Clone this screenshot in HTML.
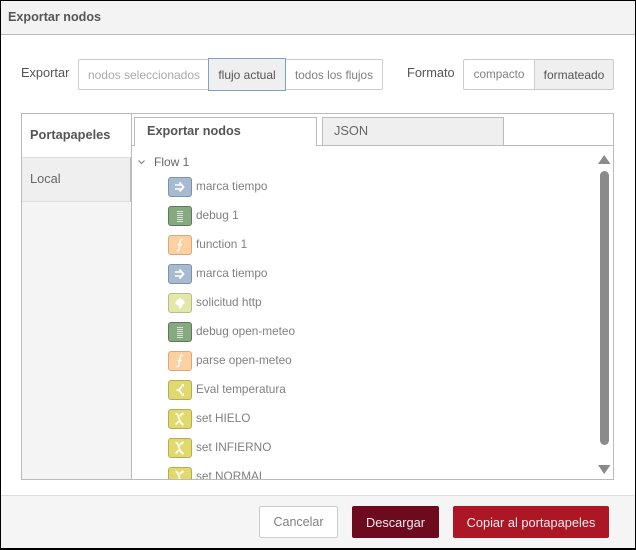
<!DOCTYPE html>
<html><head><meta charset="utf-8">
<style>
*{box-sizing:border-box}
html,body{margin:0;padding:0;width:636px;height:550px;overflow:hidden;background:#fff;font-family:"Liberation Sans",sans-serif;font-size:12px;color:#555}
.a{position:absolute}
.t{position:absolute;white-space:nowrap;line-height:16px}
.b{position:absolute;border:1px solid #ccc;display:flex;align-items:center;justify-content:center;white-space:nowrap;font-size:12px;background:#fff}
.ic{position:absolute;left:168px;width:24px;height:20px;border-radius:3px;border:1px solid;overflow:hidden}
.ic svg{position:absolute;left:0;top:0}
.n{position:absolute;white-space:nowrap;color:#808080;font-size:11.8px;line-height:16px}
</style></head><body>
<div class="a" style="left:0;top:0;width:636px;height:550px;border:1px solid #000;border-width:1px 1px 2px 1px"></div>
<div class="a" style="left:1px;top:1px;width:634px;height:34px;background:#f3f3f3;border-bottom:1px solid #bbb"></div>
<div class="t" style="left:8px;top:9px;font-size:12.6px;font-weight:bold;color:#555">Exportar nodos</div>

<div class="t" style="left:21px;top:65px;font-size:12.8px">Exportar</div>
<div class="b" style="left:78px;top:59px;width:131px;height:31px;color:#aaa;border-radius:2px 0 0 2px;padding-left:1px">nodos seleccionados</div>
<div class="b" style="left:285px;top:59px;width:98px;height:31px;color:#808080;border-radius:0 2px 2px 0;font-size:11.8px">todos los flujos</div>
<div class="b" style="left:208px;top:58px;width:78px;height:33px;background:#efefef;border-color:#7d9fcb;color:#555">flujo actual</div>
<div class="t" style="left:407px;top:65px;font-size:12.8px">Formato</div>
<div class="b" style="left:463px;top:59px;width:72px;height:31px;color:#808080;border-radius:2px 0 0 2px;font-size:11.7px">compacto</div>
<div class="b" style="left:534px;top:59px;width:80px;height:31px;background:#efefef;color:#555;border-radius:0 2px 2px 0">formateado</div>

<div class="a" style="left:21px;top:113px;width:593px;height:367px;border:1px solid #bbb;background:#fff"></div>
<div class="a" style="left:22px;top:114px;width:110px;height:365px;background:#f4f4f4;border-right:1px solid #bbb"></div>
<div class="a" style="left:22px;top:114px;width:109px;height:43px;background:#fff"></div>
<div class="t" style="left:30px;top:127px;font-weight:bold;font-size:12.8px;color:#555">Portapapeles</div>
<div class="a" style="left:22px;top:157px;width:109px;height:45px;background:#efefef;border-top:1px solid #ddd;border-bottom:1px solid #ddd;border-right:1px solid #bbb"></div>
<div class="t" style="left:30px;top:171px;font-size:12.8px;color:#666">Local</div>

<div class="a" style="left:132px;top:145px;width:481px;height:1px;background:#bbb"></div>
<div class="a" style="left:134px;top:117px;width:183px;height:29px;background:#fff;border:1px solid #bbb;border-bottom:0"></div>
<div class="t" style="left:147px;top:123px;font-weight:bold;font-size:12.7px;color:#555">Exportar nodos</div>
<div class="a" style="left:322px;top:117px;width:182px;height:29px;background:#efefef;border:1px solid #bbb"></div>
<div class="t" style="left:334px;top:123px;font-size:12.8px;color:#666">JSON</div>

<svg class="a" style="left:137px;top:158px" width="10" height="8"><path d="M1.500 2.500L4.500 5.500L7.500 2.500" fill="none" stroke="#777" stroke-width="1"/></svg>
<div class="t" style="left:154px;top:154px;color:#666">Flow 1</div>

<div class="a" style="left:132px;top:146px;width:481px;height:333px;overflow:hidden">
<div class="n" style="left:64px;top:32px">marca tiempo</div>
<div class="n" style="left:64px;top:61px">debug 1</div>
<div class="n" style="left:64px;top:90px">function 1</div>
<div class="n" style="left:64px;top:119px">marca tiempo</div>
<div class="n" style="left:64px;top:148px">solicitud http</div>
<div class="n" style="left:64px;top:177px">debug open-meteo</div>
<div class="n" style="left:64px;top:206px">parse open-meteo</div>
<div class="n" style="left:64px;top:235px">Eval temperatura</div>
<div class="n" style="left:64px;top:264px">set HIELO</div>
<div class="n" style="left:64px;top:293px">set INFIERNO</div>
<div class="n" style="left:64px;top:322px">set NORMAL</div>

<div class="ic" style="left:36px;top:31px;background:#a6bbcf;border-color:#7f91a5"><svg width="22" height="18"><path d="M6 7h6M6 11h6" stroke="#fff" stroke-width="1.600" fill="none"/><path d="M10.500 4.500L14.500 9L10.500 13.500" stroke="#fff" stroke-width="1.800" fill="none"/></svg></div>
<div class="ic" style="left:36px;top:60px;background:#87a980;border-color:#5f7a59"><svg width="22" height="18"><path d="M8 4.500h6M8 6.500h6M8 8.500h6M8 10.500h6M8 12.500h6M8 14.500h6" stroke="#d8e4d5" stroke-width="1"/></svg></div>
<div class="ic" style="left:36px;top:89px;background:#fdd0a2;border-color:#d7a980"><svg width="22" height="18"><path d="M14 3.500c-2-.5-2.800.5-3 2.500l-1 7c-.2 1.500-1 2-2.500 1.500M8.500 8.500h4.500" fill="none" stroke="#fff" stroke-width="1.400"/></svg></div>
<div class="ic" style="left:36px;top:118px;background:#a6bbcf;border-color:#7f91a5"><svg width="22" height="18"><path d="M6 7h6M6 11h6" stroke="#fff" stroke-width="1.600" fill="none"/><path d="M10.500 4.500L14.500 9L10.500 13.500" stroke="#fff" stroke-width="1.800" fill="none"/></svg></div>
<div class="ic" style="left:36px;top:147px;background:#e3e8a8;border-color:#b9bd8a"><svg width="22" height="18"><path d="M11 4l4 2.500 1 2.500-2 1.500-1.500 3-2 1-1-3-3-1.500 0-2.500z" fill="#fff"/></svg></div>
<div class="ic" style="left:36px;top:176px;background:#87a980;border-color:#5f7a59"><svg width="22" height="18"><path d="M8 4.500h6M8 6.500h6M8 8.500h6M8 10.500h6M8 12.500h6M8 14.500h6" stroke="#d8e4d5" stroke-width="1"/></svg></div>
<div class="ic" style="left:36px;top:205px;background:#fdd0a2;border-color:#d7a980"><svg width="22" height="18"><path d="M14 3.500c-2-.5-2.800.5-3 2.500l-1 7c-.2 1.500-1 2-2.500 1.500M8.500 8.500h4.500" fill="none" stroke="#fff" stroke-width="1.400"/></svg></div>
<div class="ic" style="left:36px;top:234px;background:#e2d96e;border-color:#b5ad56"><svg width="22" height="18"><path d="M7.500 9h2.500l3-4M10 9l3 4" fill="none" stroke="#fff" stroke-width="1.800"/><path d="M12 3h3v3zM12 15h3v-3z" fill="#fff"/></svg></div>
<div class="ic" style="left:36px;top:263px;background:#e2d96e;border-color:#b5ad56"><svg width="22" height="18"><path d="M6.500 3.500c2 .2 2.500 2 3.500 5s1.500 5 3.500 5.500M6.500 14c1.600-.3 2.200-1.300 3-3M11 6.500c.5-1.500 1-2.500 2.500-2.800" fill="none" stroke="#fff" stroke-width="1.700"/><path d="M13 2l2 1.800-2 1.800zM13 12.500l2 1.800-2 1.800z" fill="#fff"/></svg></div>
<div class="ic" style="left:36px;top:292px;background:#e2d96e;border-color:#b5ad56"><svg width="22" height="18"><path d="M6.500 3.500c2 .2 2.500 2 3.500 5s1.500 5 3.500 5.500M6.500 14c1.600-.3 2.200-1.300 3-3M11 6.500c.5-1.500 1-2.500 2.500-2.800" fill="none" stroke="#fff" stroke-width="1.700"/><path d="M13 2l2 1.800-2 1.800zM13 12.500l2 1.800-2 1.800z" fill="#fff"/></svg></div>
<div class="ic" style="left:36px;top:321px;background:#e2d96e;border-color:#b5ad56"><svg width="22" height="18"><path d="M6.500 3.500c2 .2 2.500 2 3.500 5s1.500 5 3.500 5.500M6.500 14c1.600-.3 2.200-1.300 3-3M11 6.500c.5-1.500 1-2.500 2.500-2.800" fill="none" stroke="#fff" stroke-width="1.700"/><path d="M13 2l2 1.800-2 1.800zM13 12.500l2 1.800-2 1.800z" fill="#fff"/></svg></div>
</div>

<svg class="a" style="left:598px;top:155px" width="13" height="10"><path d="M6.200 0L12.500 9H0z" fill="#8a8a8a"/></svg>
<div class="a" style="left:600px;top:171px;width:9px;height:274px;background:#8a8a8a;border-radius:4.500px"></div>
<svg class="a" style="left:598px;top:465px" width="13" height="10"><path d="M0 0H12.500L6.200 9z" fill="#8a8a8a"/></svg>

<div class="a" style="left:1px;top:495px;width:634px;height:53px;background:#f5f5f5;border-top:1px solid #ddd"></div>
<div class="b" style="left:259px;top:506px;width:79px;height:32px;color:#808080;border-radius:2px;font-size:12.5px">Cancelar</div>
<div class="b" style="left:352px;top:506px;width:87px;height:32px;background:#6e0a1e;border:0;color:#eee;border-radius:2px;font-size:12.8px">Descargar</div>
<div class="b" style="left:453px;top:506px;width:156px;height:32px;background:#ad1625;border:0;color:#eee;border-radius:2px;font-size:12.8px">Copiar al portapapeles</div>
</body></html>
